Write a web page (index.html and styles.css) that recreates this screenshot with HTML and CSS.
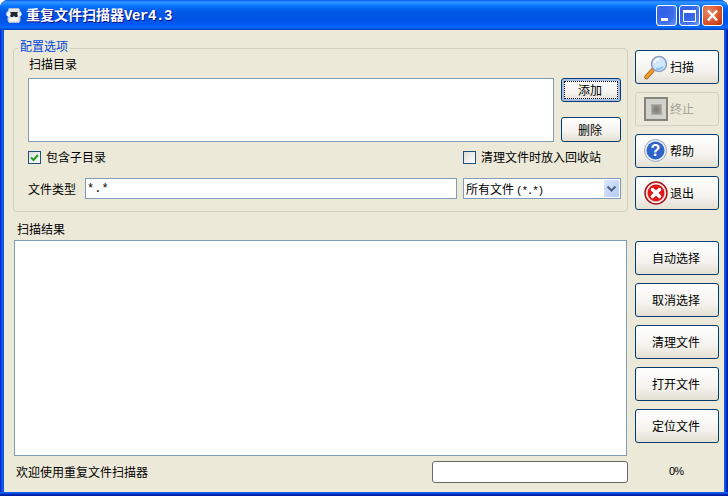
FILE: index.html
```html
<!DOCTYPE html>
<html lang="zh-CN">
<head>
<meta charset="utf-8">
<title>重复文件扫描器Ver4.3</title>
<link rel="stylesheet" href="styles.css">
</head>
<body>
<div class="window">
  <header class="titlebar">
    <svg class="app-icon" width="16" height="17" viewBox="0 0 16 17"><path d="M3 1.500h10l1 3v9l-1 2H3l-1-2v-9z" fill="#e4e6ea" stroke="#b4bccb"/><path d="M3 5h10v3l-2 2H9L8 8.500 7 10H5L3 8z" fill="#23262c"/><path d="M4 11h8v3H4z" fill="#f8f8f8"/><circle cx="2.500" cy="7" r="2.300" fill="#fff"/><circle cx="13.500" cy="7" r="2.300" fill="#eaf2ff"/></svg>
    <div class="title"><span>重复文件扫描器</span><span class="title-latin">Ver4.3</span></div>
    <div class="caption-buttons">
      <div class="cap cap-blue"><svg width="21" height="21" viewBox="0 0 21 21"><rect x="5" y="13" width="7" height="3" fill="#fff"/></svg></div>
      <div class="cap cap-blue"><svg width="21" height="21" viewBox="0 0 21 21"><path d="M4.500 5.500h12v11h-12z" fill="none" stroke="#fff"/><rect x="4" y="5" width="13" height="3" fill="#fff"/></svg></div>
      <div class="cap cap-red"><svg width="21" height="21" viewBox="0 0 21 21"><path d="M6 5.500l9 10M15 5.500l-9 10" stroke="#fff" stroke-width="2.400" fill="none"/></svg></div>
    </div>
  </header>
  <main class="client">
    <div class="left">
      <section class="group">
        <div class="legend">配置选项</div>
        <div class="label dir-label">扫描目录</div>
        <div class="dir-row">
          <div class="field dir-box"></div>
          <div class="dir-actions">
            <div class="btn small focused"><span class="focus-ring">添加</span></div>
            <div class="btn small">删除</div>
          </div>
        </div>
        <div class="check-row">
          <label class="check"><span class="box checked"><svg width="11" height="11" viewBox="0 0 11 11"><path d="M2 5.500l2.500 2.500 4.500-5" fill="none" stroke="#21a121" stroke-width="2"/></svg></span>包含子目录</label>
          <label class="check"><span class="box"></span>清理文件时放入回收站</label>
        </div>
        <div class="type-row">
          <span class="label">文件类型</span>
          <div class="field type-input">*.*</div>
          <div class="field type-select">
            <span>所有文件<span class="select-latin">(*.*)</span></span>
            <span class="drop"><svg width="11" height="8" viewBox="0 0 11 8"><path d="M1.500 1.500l4 4 4-4" fill="none" stroke="#4d6185" stroke-width="2"/></svg></span>
          </div>
        </div>
      </section>
      <div class="label results-label">扫描结果</div>
      <div class="field results"></div>
      <div class="status">
        <span class="status-text">欢迎使用重复文件扫描器</span>
        <div class="progress"></div>
      </div>
    </div>
    <div class="right">
      <div class="btn big iconic"><svg width="26" height="28" viewBox="0 0 26 28"><path d="M3.500 24L9.500 17.500" stroke="#9c6a2a" stroke-width="4.600" stroke-linecap="round"/><path d="M3.500 24L9.500 17.500" stroke="#f09a2c" stroke-width="3" stroke-linecap="round"/><circle cx="16" cy="11" r="7.500" fill="#cfe6fb" stroke="#8d9fc4" stroke-width="1.600"/><path d="M11.500 10a5 5 0 0 1 5-4" fill="none" stroke="#fff" stroke-width="2"/><path d="M13 15.500a6 6 0 0 0 7-2" fill="none" stroke="#8cc2f0" stroke-width="2"/></svg><span>扫描</span></div>
      <div class="btn big iconic disabled"><span class="stop-icon"><i></i></span><span>终止</span></div>
      <div class="btn big iconic"><svg width="26" height="24" viewBox="0 0 26 24"><circle cx="12.500" cy="11.500" r="11" fill="#e6ebf6" stroke="#9aa6c4"/><circle cx="12.500" cy="11.500" r="9" fill="#2f63c8"/><text x="12.500" y="17" text-anchor="middle" class="help-mark">?</text></svg><span>帮助</span></div>
      <div class="btn big iconic"><svg width="26" height="24" viewBox="0 0 26 24"><circle cx="13" cy="12" r="11" fill="#f8eaea" stroke="#a81414" stroke-width="1.500"/><circle cx="13" cy="12" r="8.500" fill="#e01818"/><path d="M9.500 8.500l7 7M16.500 8.500l-7 7" stroke="#fff" stroke-width="3.500" stroke-linecap="round"/></svg><span>退出</span></div>
      <div class="action-gap"></div>
      <div class="btn big plain">自动选择</div>
      <div class="btn big plain">取消选择</div>
      <div class="btn big plain">清理文件</div>
      <div class="btn big plain">打开文件</div>
      <div class="btn big plain">定位文件</div>
      <div class="percent">0%</div>
    </div>
  </main>
</div>
</body>
</html>
```
FILE: styles.css
```css
* { box-sizing: border-box; }
html, body { margin: 0; padding: 0; }
body {
  width: 728px;
  height: 496px;
  overflow: hidden;
  background: #fff;
  font: 12px/16px "Noto Sans CJK SC", "Liberation Sans", sans-serif;
  color: #000;
}
.window {
  width: 728px;
  height: 496px;
  display: flex;
  flex-direction: column;
  background:
    linear-gradient(180deg, transparent 492px, #0855dd 492px, #166aee 493px, #0831d9 494px, #001ea0 495px),
    linear-gradient(90deg, #0019cf 0, #0831d9 1px, #166aee 2px, #0855dd 3px, #0855dd 724px, #166aee 725px, #0831d9 726px, #001ea0 727px);
  border-radius: 8px 8px 0 0;
  overflow: hidden;
}
.titlebar {
  height: 30px;
  flex: none;
  display: flex;
  align-items: center;
  padding: 0 5px 0 6px;
  background: linear-gradient(180deg, #0058ee 0, #3593ff 2px, #288eff 3px, #127dff 5px, #036ffc 7px, #0262ee 9px, #0057e5 13px, #0054e3 18px, #0055eb 22px, #005bf5 25px, #026afe 27px, #0062ef 28px, #0052d6 29px, #0040ab 30px);
}
.app-icon { flex: none; }
.title {
  margin-left: 4px;
  flex: 1;
  color: #fff;
  font-size: 14px;
  font-weight: 700;
  line-height: 18px;
  text-shadow: 1px 1px 0 #0f1089;
}
.title-latin {
  font-family: "Liberation Mono", monospace;
  letter-spacing: -0.4px;
}
.caption-buttons { display: flex; gap: 2px; }
.cap {
  width: 21px;
  height: 21px;
  border: 1px solid #fff;
  border-radius: 3px;
  overflow: hidden;
}
.cap svg { display: block; margin: -1px; }
.cap-blue { background: radial-gradient(circle at 35% 35%, #2f5fe4 0, #3a6cea 55%, #6f9af5 100%); }
.cap-red { background: radial-gradient(circle at 30% 30%, #e98a68 0, #d9512a 60%, #b83010 100%); }
.client {
  flex: 1;
  min-height: 0;
  margin: 0 4px 4px;
  background: #ece9d8;
  display: flex;
  padding: 18px 5px 0 9px;
  gap: 7px;
}
.left { width: 615px; display: flex; flex-direction: column; }
.group {
  height: 164px;
  border: 1px solid #d0d0bf;
  border-radius: 4px;
  padding: 7px 6px 0 14px;
  position: relative;
  display: flex;
  flex-direction: column;
}
.legend {
  position: absolute;
  left: 4px;
  top: -11px;
  padding: 0 2px;
  background: #ece9d8;
  color: #0046d5;
}
.dir-label { padding-left: 1px; }
.dir-row { margin-top: 6px; display: flex; gap: 7px; }
.field { border: 1px solid #7f9db9; background: #fff; }
.dir-box { width: 526px; height: 64px; }
.dir-actions { display: flex; flex-direction: column; justify-content: space-between; width: 60px; }
.btn {
  border: 1px solid #003c74;
  border-radius: 3px;
  background: linear-gradient(180deg, #fff 0, #f4f3ee 60%, #e3e0d3 100%);
  display: flex;
  align-items: center;
  justify-content: center;
}
.btn.small { height: 24px; padding-right: 2px; }
.btn.small + .btn.small { height: 25px; }
.btn.focused { padding: 2px; box-shadow: inset 0 0 0 2px #a6bfe8; }
.focus-ring {
  flex: 1;
  align-self: stretch;
  border: 1px dotted #000;
  padding-right: 2px;
  display: flex;
  align-items: center;
  justify-content: center;
}
.check-row {
  margin-top: 7px;
  height: 16px;
  display: flex;
  justify-content: space-between;
  padding-right: 20px;
}
.check { display: flex; align-items: center; gap: 5px; white-space: nowrap; }
.box {
  width: 13px;
  height: 13px;
  border: 1px solid #1c5180;
  background: linear-gradient(135deg, #dcdcd7 0, #fff 100%);
  display: flex;
  align-items: center;
  justify-content: center;
}
.type-row { margin-top: 13px; display: flex; align-items: center; }
.type-input {
  margin-left: 9px;
  width: 372px;
  height: 21px;
  line-height: 21px;
  padding-left: 1px;
  font-family: "Liberation Mono", monospace;
}
.type-select {
  margin-left: 6px;
  width: 158px;
  height: 21px;
  line-height: 19px;
  padding: 0 1px 0 2px;
  display: flex;
  justify-content: space-between;
}
.select-latin {
  margin-left: 2px;
  font-family: "Liberation Mono", monospace;
  font-size: 11px;
  letter-spacing: -1.200px;
}
.drop {
  width: 15px;
  height: 17px;
  margin-top: 1px;
  border-radius: 1px;
  background: linear-gradient(135deg, #dde8fd 0, #b3c9f5 100%);
  display: flex;
  align-items: center;
  justify-content: center;
}
.results-label { margin: 9px 0 3px 4px; }
.results { margin: 0 1px; height: 216px; flex: none; }
.status {
  margin-top: 5px;
  display: flex;
  align-items: center;
  justify-content: space-between;
  padding-left: 3px;
  height: 22px;
}
.progress {
  width: 196px;
  height: 22px;
  border: 1px solid #686868;
  border-radius: 3px;
  background: #fff;
}
.right { width: 84px; display: flex; flex-direction: column; padding-top: 2px; gap: 8px; }
.btn.big { height: 34px; flex: none; }
.btn.plain { padding-right: 2px; }
.btn.iconic { justify-content: flex-start; padding-left: 7px; gap: 1px; }
.disabled {
  border-color: #d2d0c2;
  color: #a1a192;
  background: #ece9d8;
}
.stop-icon {
  width: 24px;
  height: 24px;
  margin: 0 1px;
  border: 2px solid #84847c;
  background: #d2d2cc;
  display: flex;
  align-items: center;
  justify-content: center;
}
.stop-icon i { width: 11px; height: 11px; background: radial-gradient(circle, #7a7a74 0, #a4a49c 100%); border: 1px solid #aeaea6; }
.help-mark { font: 700 16px "Liberation Sans", sans-serif; fill: #fff; }
.action-gap { height: 15px; flex: none; }
.percent {
  text-align: center;
  margin-top: 12px;
  padding-right: 2px;
  font-family: "Liberation Sans", sans-serif;
  font-size: 11px;
  letter-spacing: -1px;
}
```
